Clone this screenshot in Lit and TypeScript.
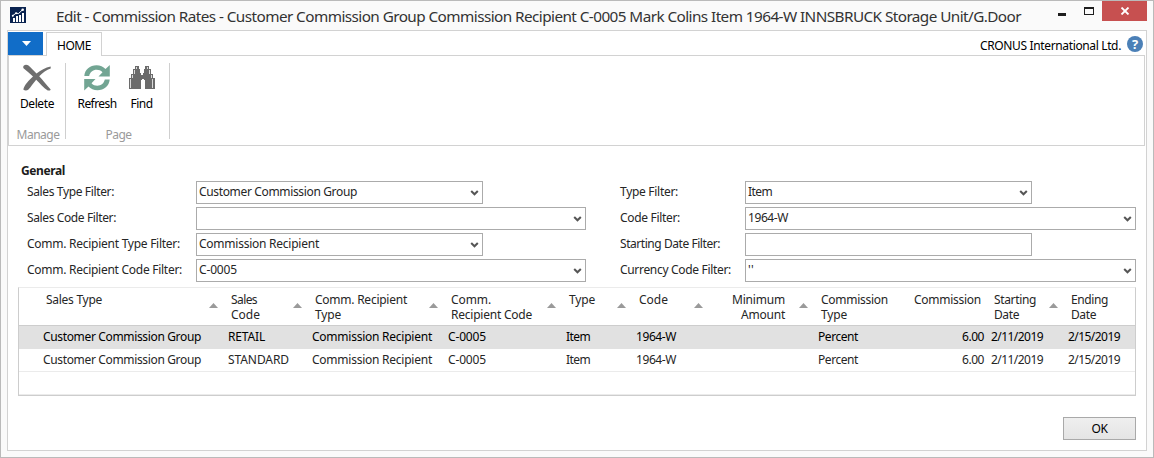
import { LitElement, html, css, svg, nothing } from "lit";
import { customElement } from "lit/decorators.js";
import { styleMap } from "lit/directives/style-map.js";

const FAMILY = '"Noto Sans", "Open Sans", sans-serif';
const ctx = document.createElement("canvas").getContext("2d")!;

/** Text tracked so that it occupies the given advance width. */
const fit = (text: string, width: number, font = "12px") => {
  ctx.font = `${font} ${FAMILY}`;
  const spacing = (width - ctx.measureText(text).width) / text.length;
  return html`<span class="t" style=${styleMap({ letterSpacing: `${spacing.toFixed(3)}px` })}>${text}</span>`;
};

type Label = [string, number];
interface Field { label: Label; value?: Label; wide?: boolean; drop?: boolean }
interface Column { head: Label[]; sort?: boolean; right?: boolean }

const LEFT: Field[] = [
  { label: ["Sales Type Filter:", 87], value: ["Customer Commission Group", 158], drop: true },
  { label: ["Sales Code Filter:", 89], wide: true, drop: true },
  { label: ["Comm. Recipient Type Filter:", 153], value: ["Commission Recipient", 120], drop: true },
  { label: ["Comm. Recipient Code Filter:", 155], value: ["C-0005", 38], wide: true, drop: true },
];
const RIGHT: Field[] = [
  { label: ["Type Filter:", 58], value: ["Item", 24], drop: true },
  { label: ["Code Filter:", 60], value: ["1964-W", 40], wide: true, drop: true },
  { label: ["Starting Date Filter:", 100] },
  { label: ["Currency Code Filter:", 111], value: ["''", 6], wide: true, drop: true },
];
const COLUMNS: Column[] = [
  { head: [["Sales Type", 56]], sort: true },
  { head: [["Sales", 26], ["Code", 29]], sort: true },
  { head: [["Comm. Recipient", 92], ["Type", 26]], sort: true },
  { head: [["Comm.", 40], ["Recipient Code", 81]], sort: true },
  { head: [["Type", 26]], sort: true },
  { head: [["Code", 29]], sort: true },
  { head: [["Minimum", 53], ["Amount", 44]], sort: true, right: true },
  { head: [["Commission", 67], ["Type", 26]] },
  { head: [["Commission", 67]], right: true },
  { head: [["Starting", 42], ["Date", 25]], sort: true },
  { head: [["Ending", 37], ["Date", 25]] },
];
const row = (code: Label): (Label | null)[] => [
  ["Customer Commission Group", 158], code, ["Commission Recipient", 120], ["C-0005", 38],
  ["Item", 24], ["1964-W", 40], null, ["Percent", 40], ["6.00", 22], ["2/11/2019", 52], ["2/15/2019", 52],
];
const ROWS = [row(["RETAIL", 37]), row(["STANDARD", 61])];

const logo = svg`<svg width="16" height="16" viewBox="0 0 16 16"><path fill="#0a2350" d="M0 0h16v16H0z"/><path fill="#fff" d="M3 11h2v4H3zM6 9h2v6H6zM9 8h2v7H9zM12 6h2v9h-2z"/><path d="M2.500 8.800 6 6.200l2.600.3 4.200-4" fill="none" stroke="#fff" stroke-width="1"/><circle cx="12.700" cy="2.800" r="1.300" fill="#fff"/><circle cx="6" cy="6.300" r="1" fill="#fff"/><circle cx="2.800" cy="8.700" r="1" fill="#fff"/></svg>`;
const cross = svg`<svg width="30" height="28" viewBox="0 0 30 28"><path fill="#6e6e6e" d="M2 1.4C3.200 .4 5.300 .6 6.500 1.600 9 3.700 11.600 6.700 14.500 9.600 18.500 6.300 23.500 3.400 28.700 2.500V4.500C24.500 6 20.700 8.700 17.200 12.300 20.500 15.800 24 20.500 28.700 25.500L28 26.500H25.700C21.500 23.500 17.800 19.500 14.200 15.700 11.500 19 9 22.700 6.200 25.700 5 26.800 2.500 26.800 1.300 25.500 2.500 20.800 6.800 16.500 11 12.600 8 9.700 4.600 6.800 1.500 4.200 1 3 1.200 2 2 1.400z"/></svg>`;
const refresh = svg`<svg width="28" height="28" viewBox="0 0 28 28"><g fill="#72a593"><path d="M1.300 12C1.800 5.500 7 1.300 13.500 1.300c3.800 0 6.700 1.400 9 3.700L26.800 1v11.500H15.500l4-4.200C17.800 6.500 16 5.800 13.700 5.800 9.800 5.800 7 8.200 6.200 12z"/><path d="M26.700 15.500c-.5 6.500-5.700 10.700-12.200 10.700-3.800 0-6.700-1.400-9-3.700L1.200 26.500V15h11.300l-4 4.200c1.700 1.800 3.500 2.500 5.800 2.500 3.900 0 6.700-2.400 7.500-6.200z"/></g></svg>`;
const find = svg`<svg width="26" height="24" viewBox="0 0 26 24"><path fill="#6b6b6b" d="M6 0h4v3h1v4h1v2h2V7h1V3h1V0h4v3h2v5h2v4h2v11h-10v-9h-1v-1h-2v1h-1v9H0V12h2V8h2V3h2z"/><path fill="#fff" opacity=".75" d="M7 1h1v2H7zM18 1h1v2h-1zM5 4h1v4H5zM20 4h1v4h-1zM3 9h1v3H3zM22 9h1v3h-1zM1 13h1v9H1zM24 13h-1v9h1z"/></svg>`;
const chevron = svg`<svg class="chev" width="9" height="8" viewBox="0 0 9 8"><path d="M1.200 2 4.500 5.300 7.800 2" fill="none" stroke="#555" stroke-width="2"/></svg>`;

@customElement("app-root")
export class AppRoot extends LitElement {
  static styles = css`
    :host { display: block; font: 12px/15px "Noto Sans", "Open Sans", sans-serif; color: #262626; }
    * { box-sizing: border-box; }
    svg { display: block; flex: none; }
    .t { white-space: nowrap; }
    .window { height: 458px; border: 1px solid #bababa; background: #fafafa; padding: 0 6px 6px 6px; display: flex; flex-direction: column; }
    .title { height: 29px; flex: none; display: flex; align-items: flex-start; }
    .logo { margin: 6px 0 0 3px; }
    .caption { font-size: 15.3px; line-height: 22px; margin: 4px 0 0 30px; flex: 1; color: #333; }
    .min { width: 8px; height: 3px; background: #1e1e1e; margin: 12px 18px 0 0; }
    .max { width: 10px; height: 8px; border: 1px solid #1e1e1e; border-top-width: 2px; margin: 6px 8px 0 0; }
    .close { width: 45px; height: 20px; background: #c75050; display: grid; place-items: center; }
    .frame { flex: 1; border: 1px solid #d2d2d2; background: #fff; display: flex; flex-direction: column; }
    .tabs { height: 24px; display: flex; flex: none; padding-top: 1px; }
    .menu { width: 35px; height: 23px; background: #116dc8; display: grid; place-items: center; padding-left: 2px; }
    .tab { width: 56px; height: 24px; margin-left: 3px; margin-bottom: -1px; border: 1px solid #d2d2d2; border-bottom: 0; background: #fff; color: #000; padding: 5px 0 0 10px; z-index: 1; }
    .company { margin: 6px 6px 0 auto; color: #000; }
    .help { margin: 4px 3px 0 0; width: 16px; height: 16px; border-radius: 50%; background: #4b80b7; color: #fff; font: bold 13px/16px "Open Sans", sans-serif; text-align: center; }
    .ribbon { height: 91px; flex: none; border: 1px solid #d2d2d2; display: flex; margin-right: 1px; padding-top: 7px; }
    .group { height: 76px; border-right: 1px solid #cfcfcf; display: flex; flex-direction: column; justify-content: space-between; }
    .g1 { width: 57px; } .g2 { width: 104px; }
    .actions { display: flex; color: #000; }
    .action { display: flex; flex-direction: column; align-items: center; gap: 4px; }
    .art { height: 29px; display: flex; align-items: center; }
    .g1 .action { width: 60px; }
    .g2 .action:first-child { width: 62px; } .g2 .action:last-child { width: 27px; }
    .gname { color: #9a9a9a; text-align: center; line-height: 15px; padding-left: 2px; margin-bottom: -3px; }
    .body { flex: 1; padding: 17px 10px 10px 10px; display: flex; flex-direction: column; }
    .heading { font-weight: 700; padding-left: 3px; height: 18px; color: #1c1c1c; }
    .fields { display: grid; grid-template-columns: 593px 525px; }
    .field { display: flex; height: 26px; }
    .name { width: 169px; padding-top: 3px; }
    .fields > :last-child .name { width: 125px; }
    .fields > :first-child { padding-left: 9px; } .fields > :last-child { padding-left: 9px; }
    .box { width: 287px; height: 23px; border: 1px solid #ababab; display: flex; padding: 2px 3px 0 2px; justify-content: space-between; line-height: 15px; }
    .wide { width: 390px; }
    .fields > :last-child .wide { width: 391px; }
    .chev { margin-top: 5px; }
    .grid { height: 109px; margin-top: 2px; border: 1px solid #cdcdcd; border-top-color: #ebebeb; width: 1118px; flex: none; }
    .line { display: grid; grid-template-columns: 206px 84px 136px 118px 70px 77px 105px 80px 93px 77px 70px; height: 23px; }
    .head { height: 38px; border-bottom: 1px solid #cdcdcd; }
    .th { display: flex; justify-content: space-between; padding: 4px 7px 0 6px; }
    .th:first-child { padding-left: 27px; }
    .names { display: flex; flex-direction: column; white-space: nowrap; }
    .num .names { align-items: flex-end; margin-left: auto; }
    .sorted.num .names { margin-right: 14px; }
    .up { width: 9px; height: 5px; margin-top: 11px; background: #9a9a9a; clip-path: polygon(50% 0, 100% 100%, 0 100%); }
    .td { padding: 3px 4px 0 3px; }
    .td:first-child { padding-left: 24px; }
    .td.num { text-align: right; }
    .sel { background: #e1e1e1; color: #000; }
    .plain { border-bottom: 1px solid #ebebeb; }
    .footer { display: flex; justify-content: flex-end; margin-top: auto; }
    .ok { width: 73px; height: 23px; border: 1px solid #a9a9a9; background: linear-gradient(#efefef, #e4e4e4); color: #000; font: inherit; padding: 0; }
  `;

  private fields(list: Field[]) {
    return html`<div>${list.map((f) => html`<div class="field"><div class="name">${fit(...f.label)}</div>
      <div class="box ${f.wide ? "wide" : ""}">${f.value ? fit(...f.value) : html`<span></span>`}${f.drop ? chevron : nothing}</div></div>`)}</div>`;
  }

  render() {
    return html`<div class="window">
      <div class="title">
        <div class="logo">${logo}</div>
        <div class="caption">${fit("Edit - Commission Rates - Customer Commission Group Commission Recipient C-0005 Mark Colins Item 1964-W INNSBRUCK Storage Unit/G.Door", 965, "15.3px")}</div>
        <div class="min"></div><div class="max"></div>
        <div class="close"><svg width="10" height="8" viewBox="0 0 10 8"><path d="M1.500.5 8.500 7.500M8.500.5 1.500 7.500" stroke="#fff" stroke-width="1.800"/></svg></div>
      </div>
      <div class="frame">
        <div class="tabs">
          <div class="menu"><svg width="9" height="5" viewBox="0 0 9 5"><path fill="#fff" d="M0 0h9L4.500 5z"/></svg></div>
          <div class="tab">${fit("HOME", 34)}</div>
          <div class="company">${fit("CRONUS International Ltd.", 141)}</div>
          <div class="help">?</div>
        </div>
        <div class="ribbon">
          <div class="group g1"><div class="actions"><div class="action"><div class="art">${cross}</div>${fit("Delete", 34)}</div></div><div class="gname">${fit("Manage", 43)}</div></div>
          <div class="group g2"><div class="actions"><div class="action"><div class="art">${refresh}</div>${fit("Refresh", 39)}</div><div class="action"><div class="art">${find}</div>${fit("Find", 22)}</div></div><div class="gname">${fit("Page", 26)}</div></div>
        </div>
        <div class="body">
          <div class="heading">${fit("General", 44, "bold 12px")}</div>
          <div class="fields">${this.fields(LEFT)}${this.fields(RIGHT)}</div>
          <div class="grid">
            <div class="line head">${COLUMNS.map((c) => html`<div class="th ${c.sort ? "sorted" : ""} ${c.right ? "num" : ""}"><div class="names">${c.head.map((h) => fit(...h))}</div>${c.sort ? html`<div class="up"></div>` : nothing}</div>`)}</div>
            ${ROWS.map((r, i) => html`<div class="line ${i ? "plain" : "sel"}">${r.map((c, j) => html`<div class="td ${COLUMNS[j].right ? "num" : ""}">${c ? fit(...c) : nothing}</div>`)}</div>`)}
            <div class="line plain"></div>
          </div>
          <div class="footer"><button class="ok">${fit("OK", 16)}</button></div>
        </div>
      </div>
    </div>`;
  }
}
